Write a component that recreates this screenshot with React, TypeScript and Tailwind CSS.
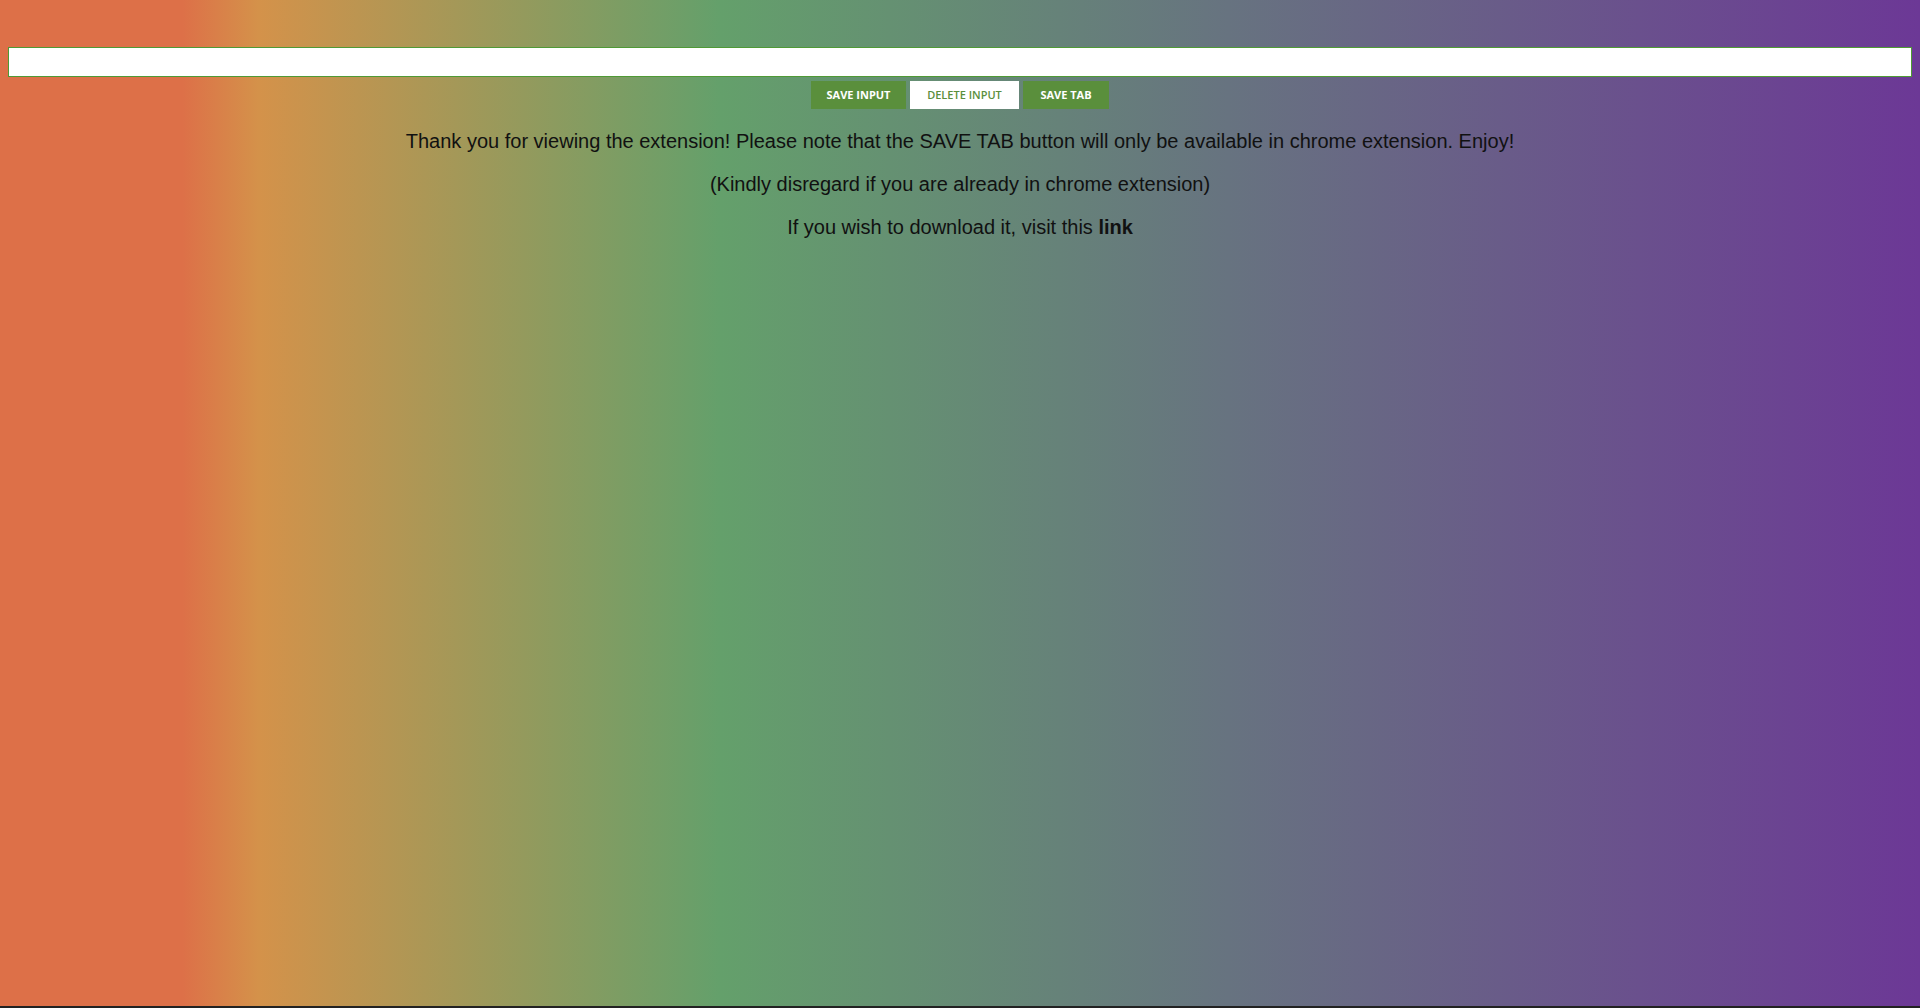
import React from 'react';

const App: React.FC = () => {
  return (
    <div className="bg-[#222222] w-full h-[1008px]">
      <div className="h-[1006px] w-full bg-[linear-gradient(to_right,#dd7048_9.5%,#d4924a_13.5%,#64a06b_37.5%,#677380_64%,#6c3896_100%)] pt-[47px] px-[8px] font-['Liberation_Sans',Arial,sans-serif]">
        <input
          type="text"
          className="block w-full h-[30px] bg-white border border-[#4f9a35] outline-none px-2"
        />
        <div className="flex justify-center gap-[4px] mt-[4px]">
          <button className="w-[95px] h-[28px] bg-[#5a8f3c] text-white text-[11px] font-bold font-['Open_Sans',sans-serif]">
            SAVE INPUT
          </button>
          <button className="w-[109px] h-[28px] bg-white text-[#5a8f3c] text-[11px] font-semibold font-['Open_Sans',sans-serif]">
            DELETE INPUT
          </button>
          <button className="w-[86px] h-[28px] bg-[#5a8f3c] text-white text-[11px] font-bold font-['Open_Sans',sans-serif]">
            SAVE TAB
          </button>
        </div>
        <div className="text-center text-[20px] leading-[23px] text-[#111111] mt-[21px] flex flex-col gap-[20px]">
          <p>
            Thank you for viewing the extension! Please note that the SAVE TAB button will only be available in chrome extension. Enjoy!
          </p>
          <p>(Kindly disregard if you are already in chrome extension)</p>
          <p>
            If you wish to download it, visit this <a href="#" className="font-bold">link</a>
          </p>
        </div>
      </div>
    </div>
  );
};

export default App;
